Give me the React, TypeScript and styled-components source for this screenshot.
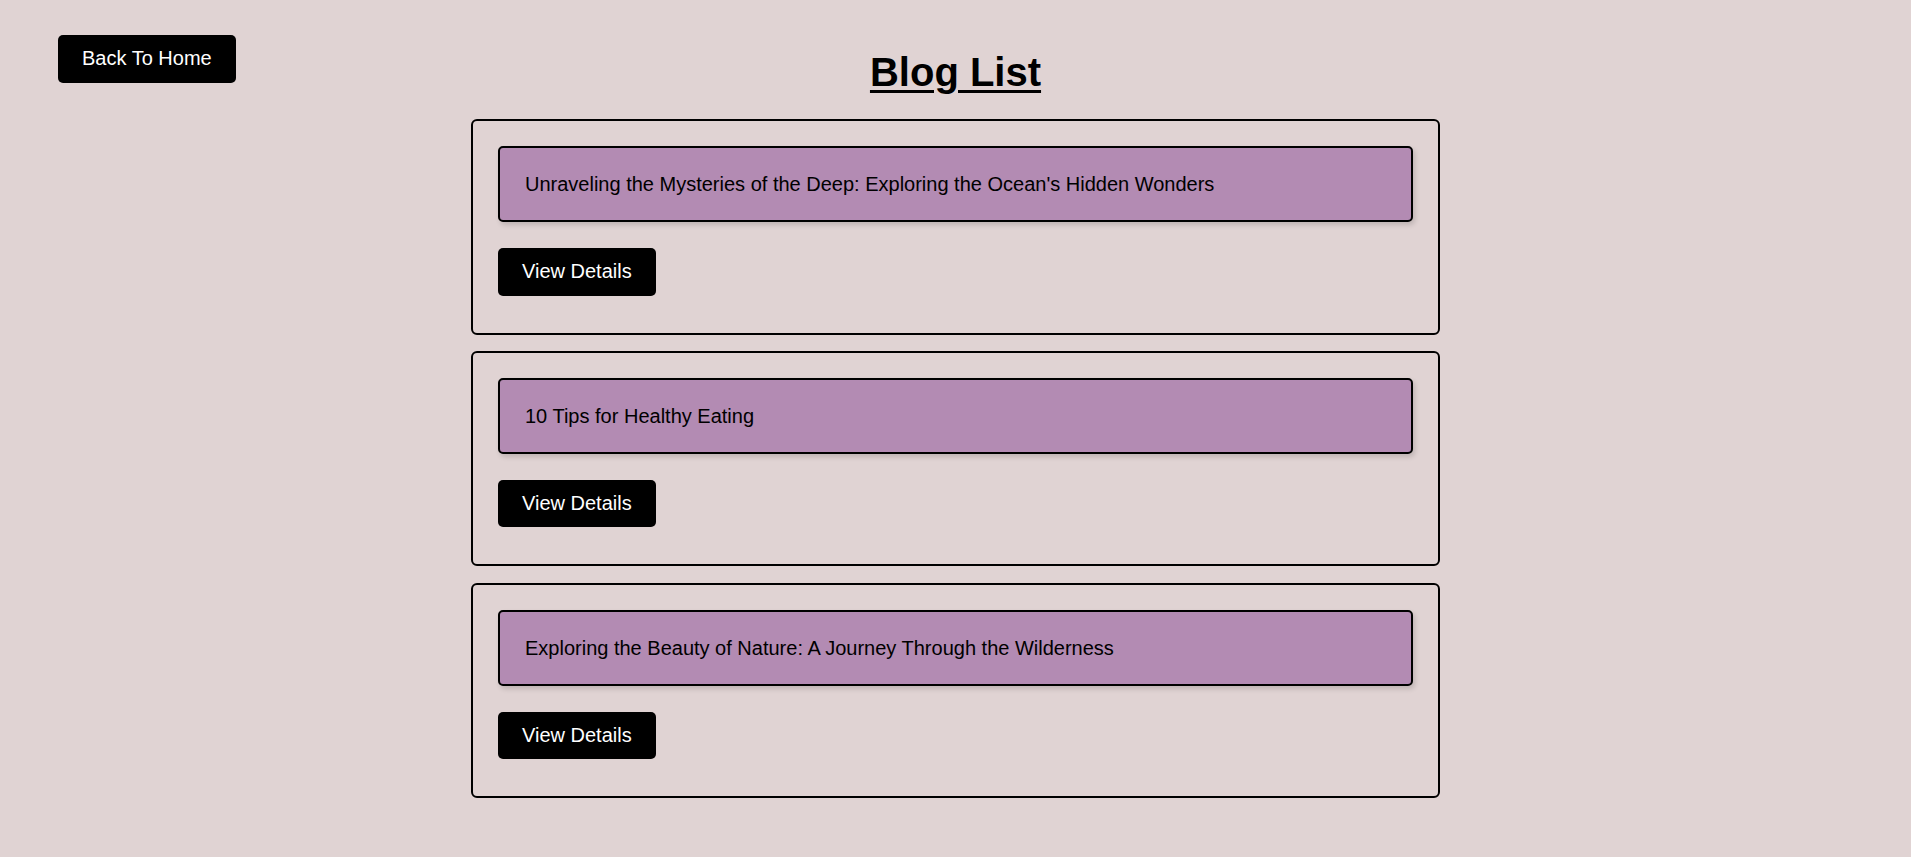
import React from "react";
import styled, { createGlobalStyle } from "styled-components";

const GlobalStyle = createGlobalStyle`
  html, body {
    margin: 0;
    padding: 0;
    background: #e0d3d3;
    font-family: Arial, "Liberation Sans", sans-serif;
    color: #000;
  }
  * { box-sizing: border-box; }
`;

const Page = styled.div`
  min-height: 857px;
  background: #e0d3d3;
  padding-top: 35px;
`;

const Header = styled.header`
  display: grid;
  grid-template-columns: 1fr auto 1fr;
  align-items: start;
  padding: 0 58px;
`;

const Button = styled.button`
  justify-self: start;
  align-self: start;
  background: #000;
  color: #fff;
  border: none;
  border-radius: 5px;
  padding: 12px 24px;
  font-family: Arial, "Liberation Sans", sans-serif;
  font-size: 20px;
  line-height: 23.5px;
  cursor: pointer;
`;

const Title = styled.h1`
  grid-column: 2;
  margin: 14px 0 0;
  font-size: 40px;
  line-height: 46px;
  font-weight: 700;
  text-decoration: underline;
  text-decoration-thickness: 3px;
  text-underline-offset: 4px;
`;

const List = styled.div`
  display: flex;
  flex-direction: column;
  align-items: center;
  gap: 16.4px;
  margin-top: 24px;
`;

const Card = styled.article`
  width: 969px;
  border: 2px solid #000;
  border-radius: 6px;
  padding: 25px 25px 37px;
  display: flex;
  flex-direction: column;
  align-items: flex-start;
  gap: 26px;
`;

const TitleBox = styled.div`
  align-self: stretch;
  background: #b38bb3;
  border: 2px solid #000;
  border-radius: 5px;
  padding: 24px 25px;
  font-size: 20px;
  line-height: 24px;
  box-shadow: 2px 3px 5px rgba(0, 0, 0, 0.15);
`;

const blogs = [
  "Unraveling the Mysteries of the Deep: Exploring the Ocean's Hidden Wonders",
  "10 Tips for Healthy Eating",
  "Exploring the Beauty of Nature: A Journey Through the Wilderness",
];

export default function App() {
  return (
    <Page>
      <GlobalStyle />
      <Header>
        <Button>Back To Home</Button>
        <Title>Blog List</Title>
      </Header>
      <List>
        {blogs.map((b) => (
          <Card key={b}>
            <TitleBox>{b}</TitleBox>
            <Button>View Details</Button>
          </Card>
        ))}
      </List>
    </Page>
  );
}
